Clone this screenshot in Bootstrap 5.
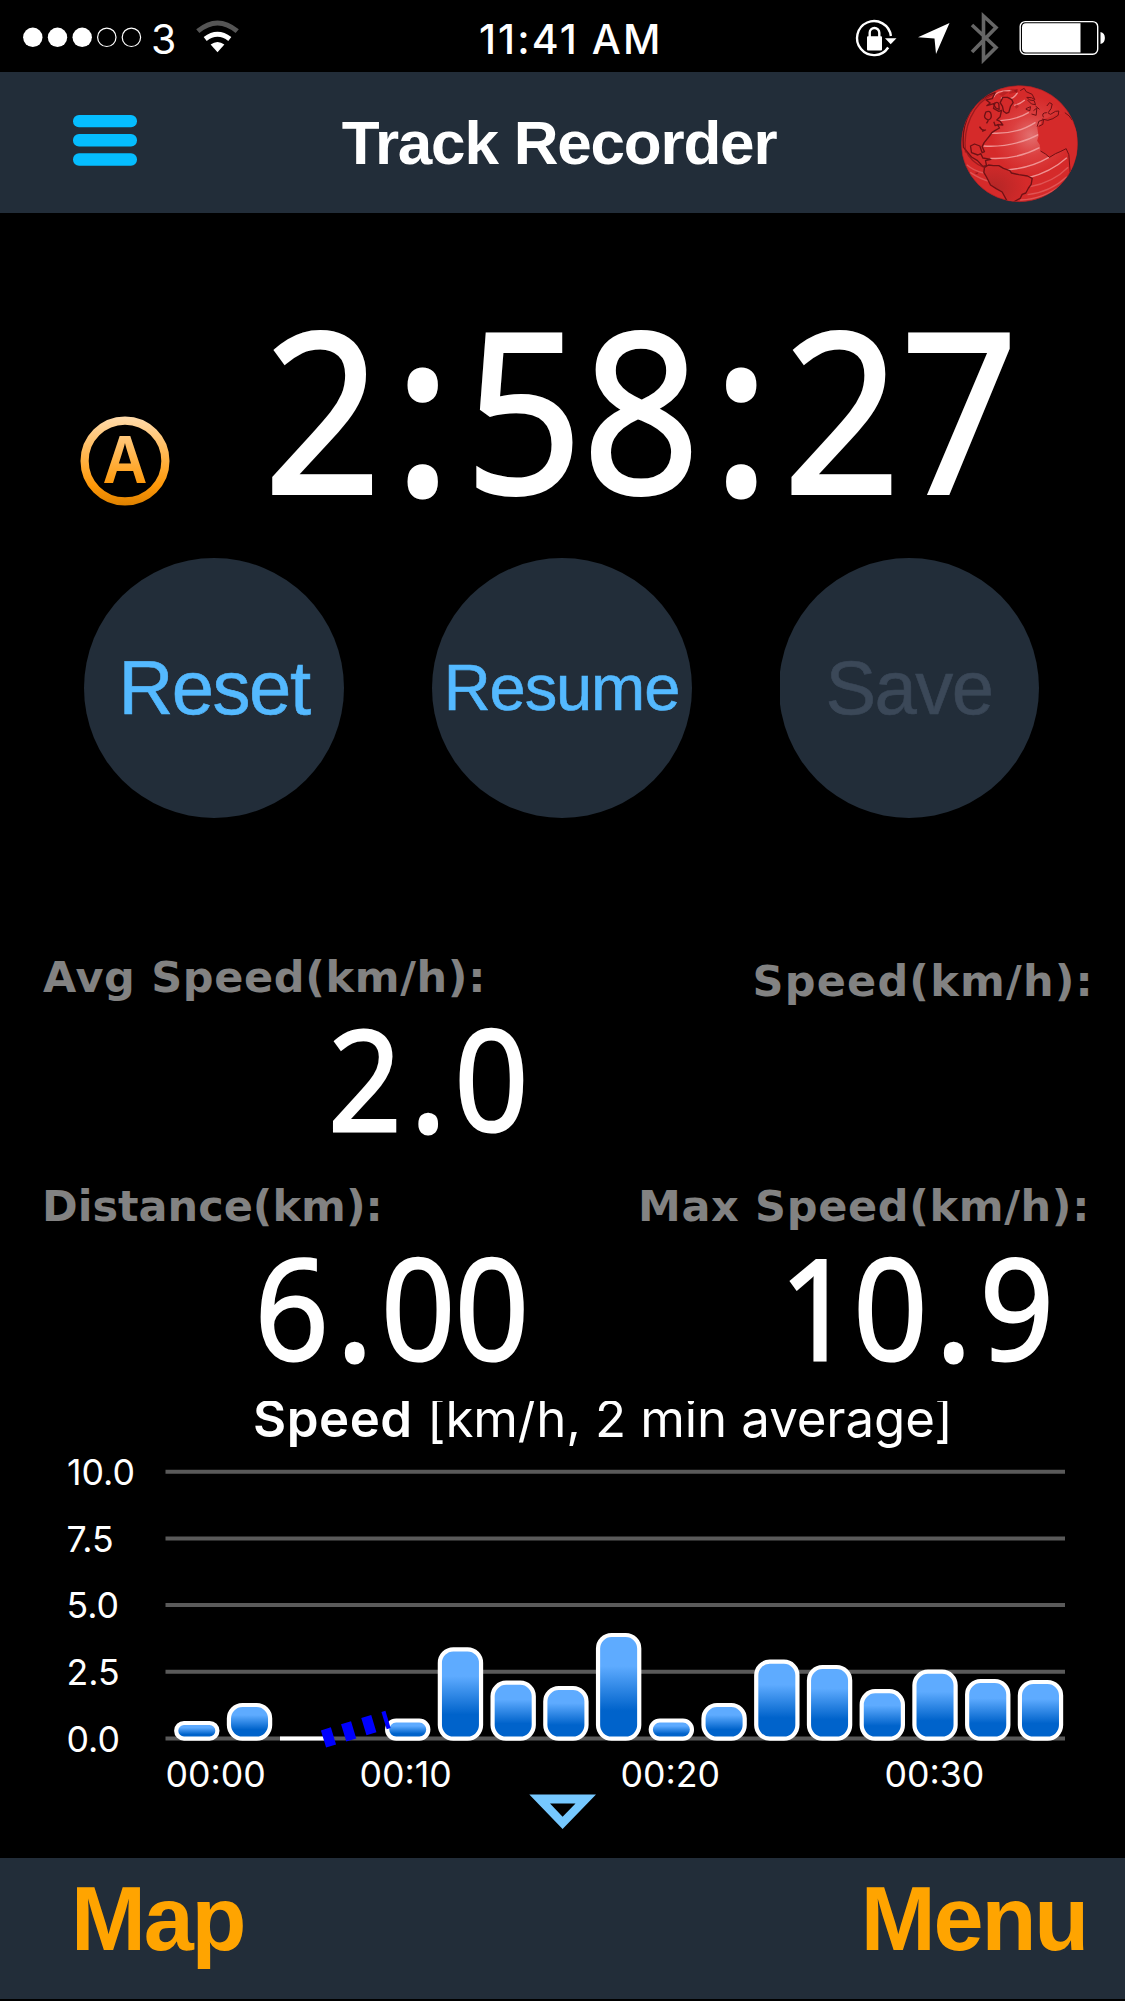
<!DOCTYPE html>
<html lang="en">
<head>
<meta charset="utf-8">
<meta name="viewport" content="width=device-width, initial-scale=1">
<title>Track Recorder</title>
<link href="https://cdn.jsdelivr.net/npm/bootstrap@5.3.0/dist/css/bootstrap.min.css" rel="stylesheet">
<style>
body{background:#000;color:#fff;width:1125px;height:2001px;overflow:hidden;font-family:"Liberation Sans",Arial,sans-serif}
svg{display:block;flex:none}
.status-bar{height:72px;font-family:Inter,sans-serif;font-size:41px;line-height:78px}
.status-left{width:479px}
.clock{font-weight:500;letter-spacing:2.1px;white-space:nowrap}
.app-bar{height:141px;background:#222d39;padding:0 46px 0 73px}
.app-title{font-size:62px;font-weight:700;letter-spacing:-1.2px;line-height:141px;padding-right:36px;padding-left:56px}
.timer-row{height:345px;padding:74px 0 0 80px}
.auto-badge{margin-top:129px}
.digits{font-family:"Open Sans",sans-serif;white-space:nowrap;display:inline-block}
.elapsed{font-size:222px;line-height:240px;margin-left:94px;transform:scaleX(.925);transform-origin:left;-webkit-text-stroke:4px #fff}
.elapsed span{padding:0 16.5px 0 15.5px;-webkit-text-stroke-width:7px}
.round-btns{padding:0 86px 0 84px}
.round-btn{width:260px;height:260px;background:#222d39;color:#54b9ff;font-size:76px;letter-spacing:-1.5px;line-height:260px;padding:0;border:0;border-radius:50%;-webkit-text-stroke:.6px currentColor}
.round-btn:disabled{background:#222d39;color:#3b4858;opacity:1;clip-path:inset(0 0 0 1px)}
.round-btn.compact{font-size:65px;letter-spacing:-1.1px}
.stats{margin-top:125px}
.stat{height:229px}
.stat-label{font:700 43px/68px "DejaVu Sans",Verdana,sans-serif;color:#828282;white-space:nowrap}
.stat-value{font-size:139px;line-height:132px;transform:scaleX(.93);transform-origin:right;-webkit-text-stroke:3px #fff}
.stat-value span{padding:0 10px;-webkit-text-stroke-width:5px}
.chart-title{font:400 51px/36px Inter,sans-serif;height:36px;padding-left:253px;letter-spacing:-.1px;white-space:nowrap;clip-path:inset(0 0 -20px 0)}
.chart-title b{font-weight:600;letter-spacing:.5px}
.chart text{font:400 35.7px Inter,sans-serif;fill:#fff}
.tab-bar{height:141px;background:#222d39;padding:0 38px 19px 71px}
.tab-bar a{color:#ffa400;font-size:90px;font-weight:700;line-height:121px;letter-spacing:-2.2px}
</style>
<script src="https://cdn.jsdelivr.net/npm/bootstrap@5.3.0/dist/js/bootstrap.bundle.min.js"></script>
</head>
<body class="d-flex flex-column">
<header>
  <div class="status-bar d-flex">
    <div class="status-left d-flex">
      <svg width="151" height="72"><g fill="#fff"><circle cx="32.8" cy="37.3" r="9.7"/><circle cx="57.5" cy="37.3" r="9.7"/><circle cx="82.2" cy="37.3" r="9.7"/></g><g fill="none" stroke="#fff" stroke-width="1.2"><circle cx="106.8" cy="37.3" r="9.2"/><circle cx="131.4" cy="37.3" r="9.2"/></g></svg>
      <span>3</span>
      <svg width="60" height="72" viewBox="177 0 60 72" overflow="visible"><path d="M218.5 52.3 211.6 44.4Q218.5 39.4 225.4 44.4Z" fill="#fff"/><path d="M206.2 39Q218.5 29.6 230.8 39" fill="none" stroke="#fff" stroke-width="5"/><path d="M198.8 31.2Q218.5 14.8 238.2 31.2" fill="none" stroke="#555" stroke-width="5"/></svg>
    </div>
    <div class="clock">11:41 AM</div>
    <div class="d-flex ms-auto">
      <svg width="54" height="72" viewBox="850 0 54 72"><path d="M888.2 47.5A17 17 0 1 1 890.9 36" fill="none" stroke="#fff" stroke-width="2.4"/><path d="M885 38.3h11.5l-5.8 6z" fill="#fff"/><rect x="867" y="36.3" width="15" height="14.2" rx="1" fill="#fff"/><path d="M869.7 37v-4.2a4.8 4.8 0 0 1 9.6 0V37" fill="none" stroke="#fff" stroke-width="2.4"/></svg>
      <svg width="56" height="72" viewBox="904 0 56 72"><path d="M949.5 23 936 54 934.5 38.5 918 37.3Z" fill="#fff"/></svg>
      <svg width="48" height="72" viewBox="960 0 48 72"><path d="M972 25 996 47.5 983.5 60V16L996 27.5 972 52" fill="none" stroke="#666" stroke-width="3.6"/></svg>
      <svg width="117" height="72" viewBox="1008 0 117 72"><rect x="1020.2" y="21.6" width="77.5" height="32.6" rx="5" fill="none" stroke="#fff" stroke-width="1.4"/><path d="M1026 23.3h54.5v29.2H1026a4 4 0 0 1-4-4V27.3a4 4 0 0 1 4-4z" fill="#fff"/><path d="M1100.5 32q4.4 1 4.4 6t-4.4 6z" fill="#fff"/></svg>
    </div>
  </div>
  <nav class="app-bar d-flex align-items-center justify-content-between">
    <svg class="mb-1" width="65" height="51" viewBox="0 0 65 51" fill="#05bdff"><rect width="64" height="12.3" rx="6"/><rect y="19" width="64" height="12.4" rx="6"/><rect y="38.3" width="64" height="12.4" rx="6"/></svg>
    <h1 class="app-title m-0">Track Recorder</h1>
    <svg class="mt-1" width="119" height="119" viewBox="60 43 356 357">
      <defs><radialGradient id="sea" cx=".6" cy=".43" r=".34"><stop offset="0" stop-color="#e37070"/><stop offset=".5" stop-color="#dc4040"/><stop offset="1" stop-color="#d52a2a"/></radialGradient>
      <radialGradient id="south" cx=".2" cy=".6" r=".7"><stop offset="0" stop-color="#b42626"/><stop offset="1" stop-color="#d52a2a"/></radialGradient>
      <clipPath id="ball"><circle cx="238" cy="219" r="174"/></clipPath></defs>
      <circle cx="238" cy="219" r="174" fill="url(#sea)" stroke="#b51f22" stroke-width="2"/>
      <g clip-path="url(#ball)" stroke-linejoin="round">
        <g fill="none" stroke="#f3a3a3" stroke-width="4"><path d="M182 82q34 12 50-16M160 80q8-22 54-20M222 104q18-4 32-16M180 150q48-2 86-25M148 187q80 6 138-32M130 226q92 6 172-38M150 263q80 4 148-32M200 298q72-6 126-38M262 322q70-18 118-61" opacity=".85"/><path d="M270 348q68-12 114-58M262 372q68-8 118-54M240 388q70-2 128-48M80 282q20 18 50 25M90 305q30 20 60 28" opacity=".35"/></g>
        <g fill="#d52a2a" stroke="#6f1115" stroke-width="4">
          <path d="M70 230C62 150 100 85 165 66L156 84 138 88 150 97 140 105 164 98 160 113 176 122 184 119 180 138 170 148 180 152 188 163 172 162 178 172 164 180 155 186 148 196 132 216 126 228 133 243 126 246 119 226 103 220 91 226 94 246 113 253 122 249 128 262 152 266 136 270 139 285 128 287 112 270 94 259 80 242Z"/>
          <path d="M188 80 202 80 215 87 219 96 211 107 206 125 198 128 190 122 187 107 180 96Z"/>
          <path d="M160 100q12-10 16 0l1 16-10-4zM137 124q14-6 16 8 2 12-8 16-12-4-12-12zM144 150l-5 8" fill="none"/>
          <path d="M118 168q8 14 18 10l-10 4M161 153l4 12 12-4" fill="none"/>
          <path d="M133 290 145 283 160 285 176 285 190 293 209 300 214 307 236 312 262 316 276 323 273 341 265 352 257 367 246 371 240 383 225 391 211 398 200 390 186 364 168 354 151 343 139 319 131 305Z" fill="url(#south)"/>
          <path d="M291 168 302 160 304 147 323 141 350 130 385 130 410 180V250L390 312 386 252 378 234 360 243 346 249 328 260 316 250 301 241 299 223 291 210 295 196Z" stroke="none"/>
          <path d="M390 305 386 252 378 234 360 243 346 249 328 260 316 250 301 241M291 168l5-16 14-5-2 14-12 6M306 145l17 4 15-5 16-10 2-13-10 1-15 9-7-4M324 126q12-12 12-26l-8-4-8 10M310 140q-8-14 10-14M257 114l14-6-2 12-12-4M240 60l12-7 6 10 18 8 8 16-10-6-14-1 8 8 14 2 4 12-12-2-12-12M280 120l10-8-2 22-14-4M286 106l12 10M374 126q14 8 22 22" fill="none" stroke-width="3"/>
        </g>
        <path d="M76 245C68 170 98 98 158 72M75 235Q90 275 135 292" fill="none" stroke="#841519" stroke-width="4" opacity=".7"/>
        <g fill="#9b171b"><path d="M176 72l14-12 16 4-18 12zM206 70l6-16 20 2 2 8zM224 108l6-8 6 8-8 6z" opacity=".45"/><path d="M103 307l12-2-4 6zM220 60l12-5-2 12z"/></g>
      </g>
    </svg>
  </nav>
</header>
<main>
  <section class="timer-row d-flex align-items-start">
    <svg class="auto-badge" width="90" height="90" viewBox="0 0 90 90"><defs><linearGradient id="amber" x1="0" y1="0" x2="0" y2="90" gradientUnits="userSpaceOnUse"><stop offset="0" stop-color="#ffdcae"/><stop offset=".5" stop-color="#ffb040"/><stop offset=".77" stop-color="#ff9808"/><stop offset="1" stop-color="#dd8100"/></linearGradient></defs><circle cx="45" cy="45" r="40.4" fill="none" stroke="url(#amber)" stroke-width="8.2"/><text x="45" y="67.3" text-anchor="middle" font-family="Liberation Sans" font-weight="700" font-size="69" textLength="45" lengthAdjust="spacingAndGlyphs" fill="url(#amber)">A</text></svg>
    <div class="digits elapsed">2<span>:</span>58<span>:</span>27</div>
  </section>
  <section class="round-btns d-flex justify-content-between">
    <button class="btn round-btn" type="button">Reset</button>
    <button class="btn round-btn compact" type="button">Resume</button>
    <button class="btn round-btn" type="button" disabled>Save</button>
  </section>
  <section class="stats row g-0">
    <div class="col-6 stat">
      <div class="stat-label" style="padding-left:43px;letter-spacing:.65px">Avg Speed(km/h):</div>
      <div class="text-end" style="padding-right:34px"><span class="digits stat-value">2<span>.</span>0</span></div>
    </div>
    <div class="col-6 stat">
      <div class="stat-label text-end" style="padding:4px 31px 0 0;letter-spacing:1.2px">Speed(km/h):</div>
    </div>
    <div class="col-6 stat">
      <div class="stat-label" style="padding-left:42px;letter-spacing:0">Distance(km):</div>
      <div class="text-end" style="padding-right:34px"><span class="digits stat-value">6<span>.</span>00</span></div>
    </div>
    <div class="col-6 stat">
      <div class="stat-label text-end" style="padding-right:35px;letter-spacing:.65px">Max Speed(km/h):</div>
      <div class="text-end" style="padding-right:71px"><span class="digits stat-value">10<span>.</span>9</span></div>
    </div>
  </section>
  <section>
    <div class="chart-title"><b>Speed</b> [km/h, 2 min average]</div>
    <svg class="chart" width="1125" height="421" viewBox="0 1437 1125 421">
      <defs><linearGradient id="bar" x1="0" y1="0" x2="0" y2="1"><stop offset=".3" stop-color="#5eabff"/><stop offset=".73" stop-color="#0063cb"/></linearGradient></defs>
      <g stroke="#5a5a5a" stroke-width="4"><path d="M165.5 1471.8H1065M165.5 1538.4H1065M165.5 1605.1H1065M165.5 1671.8H1065M165.5 1738.6H1065"/></g>
      <text x="67" y="1485">10.0</text><text x="66.5" y="1551.7">7.5</text><text x="66.5" y="1618.4">5.0</text><text x="66.5" y="1685">2.5</text><text x="66.5" y="1751.7">0.0</text>
      <path d="M280 1738.6H326" stroke="#fff" stroke-width="4"/>
      <g id="bars" fill="url(#bar)" stroke="#fff" stroke-width="4.2"></g>
      <path d="M323.5 1739 388 1719.4" stroke="#00f" stroke-width="18" stroke-dasharray="10.4 10.7"/>
      <text x="165.5" y="1786.7">00:00</text><text x="359.5" y="1786.7">00:10</text><text x="620.5" y="1786.7">00:20</text><text x="884.5" y="1786.7">00:30</text>
      <path d="M529.3 1794.5H596L562.6 1829ZM550 1803.5 562.6 1816.7 575.5 1803.5Z" fill="#76c8ff" fill-rule="evenodd"/>
    </svg>
  </section>
</main>
<footer class="tab-bar d-flex align-items-center justify-content-between">
  <a class="text-decoration-none" href="#">Map</a>
  <a class="text-decoration-none" href="#">Menu</a>
</footer>
<script>
// Top edge of each two-minute bar by slot; null marks slots without movement.
const tops = [1723, 1705, null, null, 1720.5, 1649.4, 1682.7, 1688, 1635, 1720.5, 1705, 1661.7, 1667, 1691.2, 1671.7, 1681, 1682];
const bars = document.getElementById('bars');
tops.forEach((top, i) => {
  if (top === null) return;
  const h = 1738.6 - top;
  const r = document.createElementNS('http://www.w3.org/2000/svg', 'rect');
  const attrs = { x: 176.2 + i * 52.73, y: top, width: 41.2, height: h, rx: Math.min(13.5, h / 2) };
  for (const k in attrs) r.setAttribute(k, attrs[k]);
  bars.appendChild(r);
});
</script>
</body>
</html>
